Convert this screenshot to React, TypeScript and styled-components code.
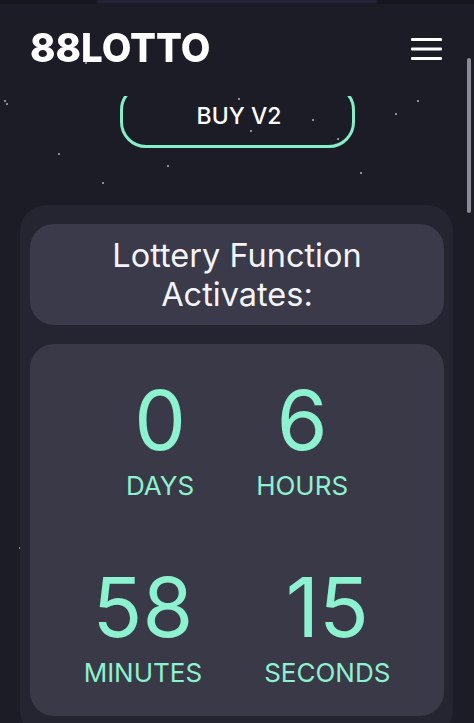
import React from "react";
import styled, { createGlobalStyle } from "styled-components";

const GlobalStyle = createGlobalStyle`
  html, body { margin: 0; padding: 0; background: #1c1c27; }
  body { overflow: hidden; font-family: Inter, "Noto Sans", sans-serif; }
  * { box-sizing: border-box; }
`;

const Page = styled.div`
  position: relative;
  width: 474px;
  height: 723px;
  overflow: hidden;
  background: #1c1c27;
  color: #ffffff;
`;

const TopStrip = styled.div`
  height: 4px;
  background: #15151e;
  display: flex;
  justify-content: center;
`;

const BlurText = styled.div`
  width: 280px;
  height: 3px;
  background: #2a2740;
  filter: blur(1px);
`;

const StarLayer = styled.div`
  position: absolute;
  inset: 0;
  pointer-events: none;
`;

const Star = styled.span`
  position: absolute;
  width: 2px;
  height: 2px;
  border-radius: 50%;
  background: #d8d8e6;
  opacity: 0.8;
`;

const Header = styled.header`
  position: relative;
  display: flex;
  justify-content: space-between;
  align-items: flex-start;
  padding: 24px 32px 0 30px;
  height: 92px;
`;

const Logo = styled.div`
  font-family: Inter, sans-serif;
  font-weight: 800;
  font-size: 40px;
  line-height: 1;
  letter-spacing: 0;
  transform: scaleX(0.96);
  transform-origin: left center;
  color: #ffffff;
`;

const MenuButton = styled.button`
  background: none;
  border: 0;
  padding: 0;
  margin-top: 10px;
  width: 31px;
  height: 24px;
  display: block;
`;

const Scrollbar = styled.div`
  position: absolute;
  left: 467px;
  top: 58px;
  width: 4px;
  height: 155px;
  border-radius: 2px;
  background: #8b8b98;
`;

const ButtonClip = styled.div`
  position: relative;
  height: 52px;
  overflow: hidden;
  display: flex;
  justify-content: center;
  align-items: flex-end;
`;

const BuyButton = styled.button`
  width: 235px;
  height: 64px;
  flex-shrink: 0;
  border: 3px solid #86eec9;
  border-radius: 26px;
  background: transparent;
  color: #ffffff;
  font-family: Inter, sans-serif;
  font-weight: 500;
  font-size: 23px;
  display: flex;
  align-items: center;
  justify-content: center;
  padding: 0 0 0 4px;
`;

const Card = styled.section`
  position: relative;
  margin: 57px 21px 0 20px;
  background: #252531;
  border-radius: 26px;
  padding: 19px 9px 20px 10px;
  display: flex;
  flex-direction: column;
  gap: 19px;
`;

const TitlePanel = styled.div`
  height: 101px;
  background: #3a3a4a;
  border-radius: 24px;
  display: flex;
  align-items: center;
  justify-content: center;
  text-align: center;
  font-family: Inter, sans-serif;
  font-weight: 400;
  font-size: 32.5px;
  line-height: 39px;
  color: #f4f4f8;
`;

const CountPanel = styled.div`
  height: 372px;
  background: #393947;
  border-radius: 24px;
  padding-top: 36px;
  display: flex;
  flex-direction: column;
  gap: 68px;
`;

const CountRow = styled.div`
  display: flex;
  justify-content: center;
  gap: 62px;
`;

const Unit = styled.div`
  display: flex;
  flex-direction: column;
  align-items: center;
  gap: 11px;
  color: #8cf2cf;
  font-family: Inter, sans-serif;
`;

const Value = styled.div`
  font-size: 82px;
  font-weight: 400;
  line-height: 1;
`;

const Label = styled.div`
  font-size: 26px;
  font-weight: 400;
  line-height: 1;
`;

const stars: [number, number][] = [
  [6, 103], [238, 98], [417, 100], [312, 119], [395, 113], [58, 153],
  [167, 165], [337, 138], [102, 182], [360, 172], [20, 242], [19, 547],
  [4, 100], [85, 62], [250, 130],
];

const rows = [
  [
    { v: "0", l: "DAYS" },
    { v: "6", l: "HOURS" },
  ],
  [
    { v: "58", l: "MINUTES" },
    { v: "15", l: "SECONDS" },
  ],
];

export default function App() {
  return (
    <Page>
      <GlobalStyle />
      <StarLayer>
        {stars.map(([x, y], i) => (
          <Star key={i} style={{ left: x, top: y }} />
        ))}
      </StarLayer>
      <TopStrip>
        <BlurText />
      </TopStrip>
      <Header>
        <Logo>88LOTTO</Logo>
        <MenuButton aria-label="menu">
          <svg width="31" height="24" viewBox="0 0 31 24">
            <rect x="0" y="0" width="31" height="3" rx="1" fill="#ffffff" />
            <rect x="0" y="9.5" width="31" height="3" rx="1" fill="#ffffff" />
            <rect x="0" y="19" width="31" height="3" rx="1" fill="#ffffff" />
          </svg>
        </MenuButton>
      </Header>
      <ButtonClip>
        <BuyButton>BUY V2</BuyButton>
      </ButtonClip>
      <Card>
        <TitlePanel>
          Lottery Function
          <br />
          Activates:
        </TitlePanel>
        <CountPanel>
          {rows.map((row, i) => (
            <CountRow key={i}>
              {row.map((u) => (
                <Unit key={u.l}>
                  <Value>{u.v}</Value>
                  <Label>{u.l}</Label>
                </Unit>
              ))}
            </CountRow>
          ))}
        </CountPanel>
      </Card>
      <Scrollbar />
    </Page>
  );
}
